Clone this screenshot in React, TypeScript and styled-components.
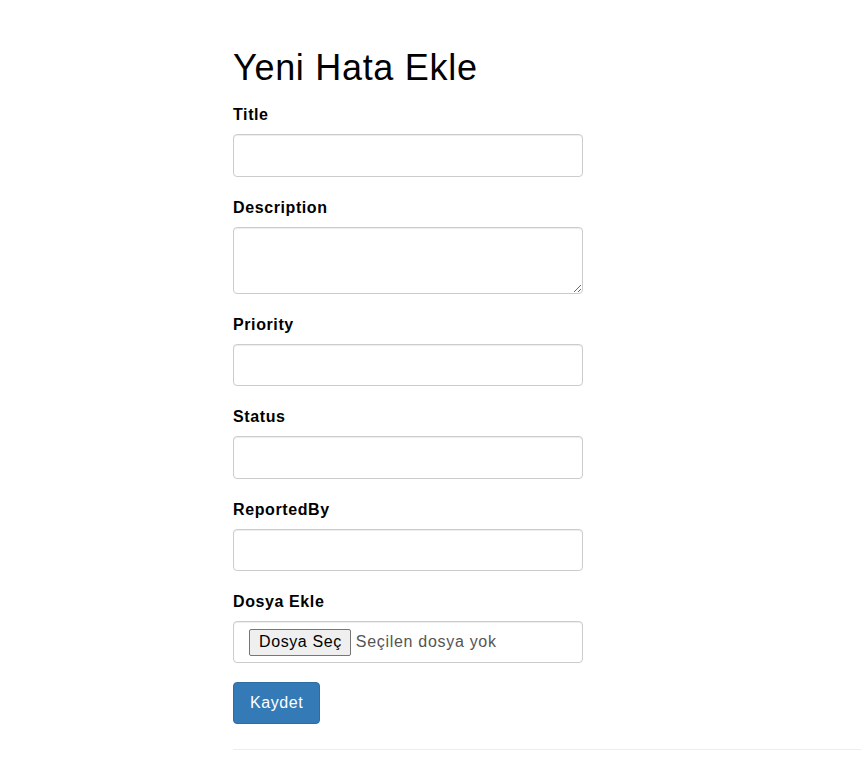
import React from "react";
import styled, { createGlobalStyle } from "styled-components";

const GlobalStyle = createGlobalStyle`
  html, body {
    margin: 0;
    padding: 0;
    background: #fff;
    overflow: hidden;
  }
  body {
    font-family: "Liberation Sans", Arial, Helvetica, sans-serif;
    font-size: 16px;
    color: #000;
  }
  * { box-sizing: border-box; }
`;

const Page = styled.div`
  padding: 48px 0 0 233px;
  width: 861px;
  height: 761px;
  overflow: hidden;
`;

const Form = styled.form`
  width: 350px;
  display: flex;
  flex-direction: column;
`;

const Heading = styled.h2`
  margin: 0 0 15px;
  font-size: 36px;
  font-weight: 400;
  line-height: 39px;
  letter-spacing: 0.7px;
  white-space: nowrap;
`;

const Group = styled.div`
  display: flex;
  flex-direction: column;
  margin-bottom: 18px;
`;

const Label = styled.label`
  font-size: 16px;
  font-weight: 700;
  line-height: 24px;
  padding-top: 1px;
  margin-bottom: 7px;
  letter-spacing: 0.6px;
`;

const fieldCss = `
  width: 350px;
  border: 1px solid #ccc;
  border-radius: 4px;
  background: #fff;
  box-shadow: inset 0 1px 1px rgba(0, 0, 0, 0.075);
  font-family: "Liberation Sans", Arial, sans-serif;
  font-size: 16px;
  color: #555;
  padding: 8px 12px;
  outline: none;
`;

const Input = styled.input`
  ${fieldCss}
  height: 42.5px;
`;

const TextArea = styled.textarea`
  ${fieldCss}
  height: 67px;
  display: block;
  resize: vertical;
`;

const FileBox = styled.div`
  ${fieldCss}
  height: 42px;
  display: flex;
  align-items: center;
  padding: 0 15px;
  gap: 5px;
`;

const FileButton = styled.span`
  display: inline-flex;
  align-items: center;
  height: 27px;
  padding: 0 8px 0 9px;
  background: #efefef;
  border: 1px solid #767676;
  border-radius: 2px;
  color: #000;
  font-size: 16px;
  line-height: 1;
  letter-spacing: 0.6px;
  white-space: nowrap;
`;

const FileText = styled.span`
  color: #555;
  font-size: 16px;
  letter-spacing: 0.7px;
  white-space: nowrap;
`;

const SubmitRow = styled.div`
  margin-top: 1px;
`;

const Button = styled.button`
  height: 42px;
  padding: 0 16px;
  background: #337ab7;
  border: 1px solid #2e6da4;
  border-radius: 4px;
  color: #fff;
  font-family: "Liberation Sans", Arial, sans-serif;
  font-size: 16px;
  letter-spacing: 0.6px;
  cursor: pointer;
`;

const Rule = styled.hr`
  margin: 25px 0 0;
  border: 0;
  border-top: 1px solid #eee;
  width: 628px;
`;

const fields = ["Priority", "Status", "ReportedBy"];

export default function App() {
  return (
    <>
      <GlobalStyle />
      <Page>
        <Form onSubmit={(e) => e.preventDefault()}>
          <Heading>Yeni Hata Ekle</Heading>
          <Group>
            <Label>Title</Label>
            <Input type="text" />
          </Group>
          <Group>
            <Label>Description</Label>
            <TextArea />
          </Group>
          {fields.map((f) => (
            <Group key={f}>
              <Label>{f}</Label>
              <Input type="text" />
            </Group>
          ))}
          <Group>
            <Label>Dosya Ekle</Label>
            <FileBox>
              <FileButton>Dosya Seç</FileButton>
              <FileText>Seçilen dosya yok</FileText>
            </FileBox>
          </Group>
          <SubmitRow>
            <Button type="submit">Kaydet</Button>
          </SubmitRow>
        </Form>
        <Rule />
      </Page>
    </>
  );
}
